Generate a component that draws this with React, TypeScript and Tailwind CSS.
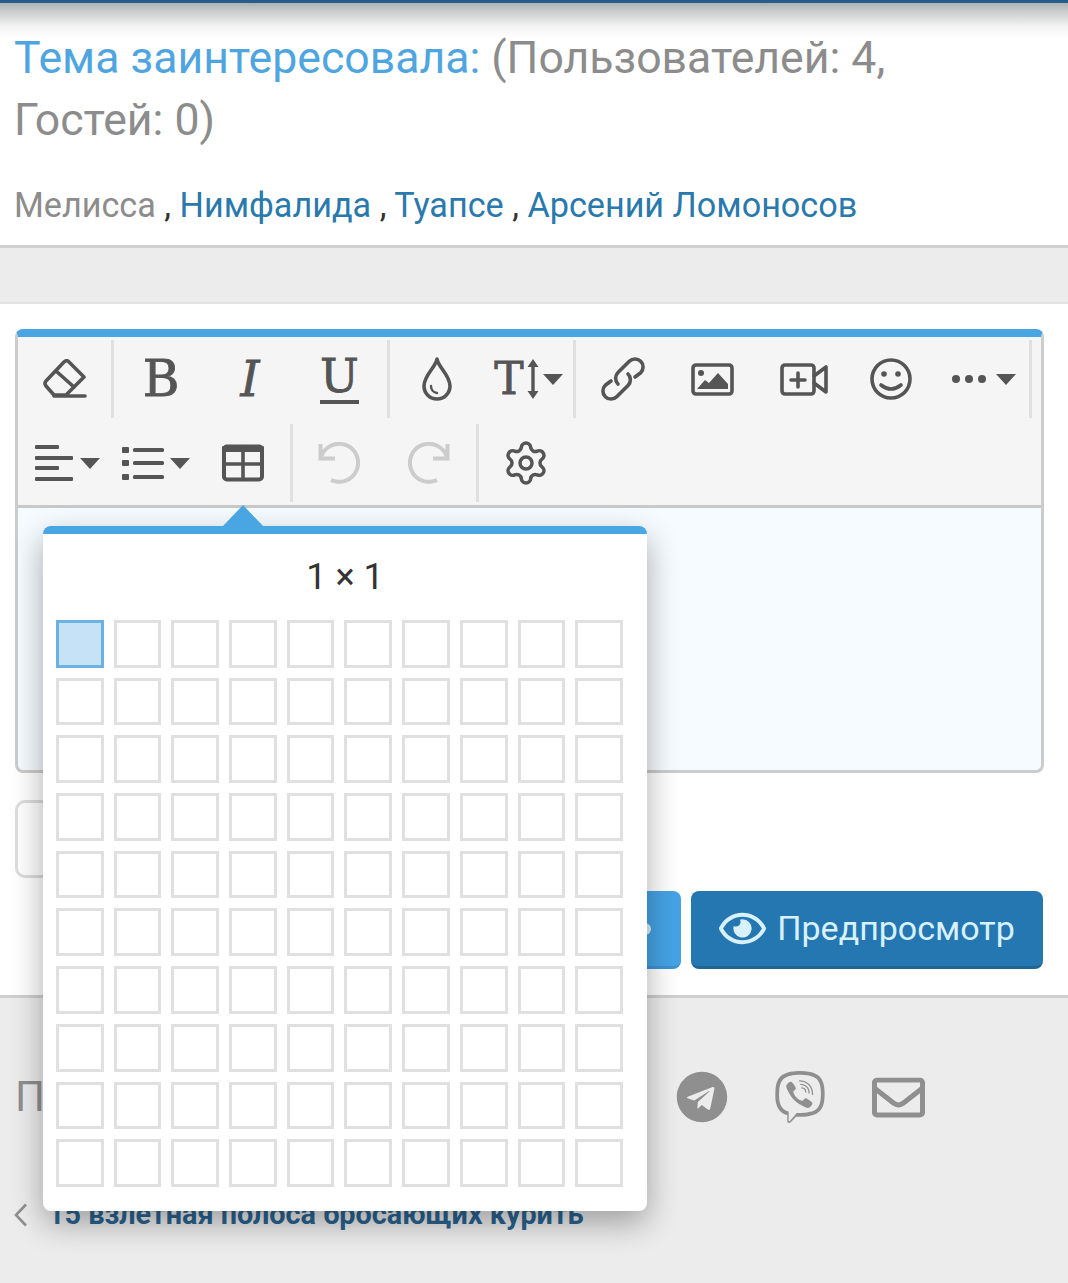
import React from "react";
import { FaTelegram, FaViber, FaRegEnvelope, FaRegEye } from "react-icons/fa";

const roboto = "[font-family:Roboto,sans-serif]";

const Caret = ({ className = "" }: { className?: string }) => (
  <span className={`inline-block w-0 h-0 border-x-[10px] border-x-transparent border-t-[11px] border-t-[#555] ${className}`} />
);

const Sep = () => <div className="w-[3px] bg-[#e0e0e0] my-[3px]" />;

const Btn = ({ w, children }: { w: string; children: React.ReactNode }) => (
  <div className={`${w} h-full flex items-center justify-center shrink-0`}>{children}</div>
);

const Ic = ({ w, h, children }: { w: number; h: number; children: React.ReactNode }) => (
  <svg width={w} height={h} viewBox={`0 0 ${w} ${h}`} fill="none" stroke="#555" strokeWidth={3.6} strokeLinecap="round" strokeLinejoin="round">
    {children}
  </svg>
);

const serif = "[font-family:'DejaVu_Serif',serif] text-[#555] leading-none [-webkit-text-stroke:0.8px_#555]";

function Row1() {
  return (
    <div className="flex h-[84px]">
      <Btn w="w-[93px]">
        <Ic w={44} h={40}>
          <path d="M25 2 L41 18 L23 36 H11 L3 27 Q1 24 3 22 L21 3 Q23 1 25 2Z" />
          <path d="M13 12 L31 28" />
          <path d="M11 37 H42" />
        </Ic>
      </Btn>
      <Sep />
      <Btn w="w-[94px]"><span className={`${serif} text-[50px] font-normal`}>B</span></Btn>
      <Btn w="w-[84px]"><span className={`${serif} text-[48px] italic`}>I</span></Btn>
      <Btn w="w-[95px]">
        <span className={`${serif} text-[46px] border-b-[4px] border-[#555] pb-[1px] mt-[-2px]`}>U</span>
      </Btn>
      <Sep />
      <Btn w="w-[94px]">
        <Ic w={32} h={44}>
          <path d="M16 2 C15 10 3 18 3 29 A13 13 0 0 0 29 29 C29 18 17 10 16 2Z" />
          <path d="M10 29 A7 7 0 0 0 16 36" strokeWidth={2.4} />
        </Ic>
      </Btn>
      <Btn w="w-[89px]">
        <div className="flex items-center">
          <span className={`${serif} text-[44px] font-normal`}>T</span>
          <svg width={12} height={42} viewBox="0 0 12 42" fill="#555" className="ml-[3px]">
            <path d="M6 1 L11.5 9 H7.7 V33 H11.5 L6 41 L.5 33 H4.3 V9 H.5Z" />
          </svg>
          <Caret className="ml-[4px]" />
        </div>
      </Btn>
      <Sep />
      <Btn w="w-[94px]">
        <Ic w={44} h={44}>
          <path d="M34 20 L39.7 15.7 A8 8 0 0 0 28.3 4.3 L17 15.6 A8 8 0 0 0 17 27" />
          <path d="M10 24 L4.3 28.3 A8 8 0 0 0 15.7 39.7 L27 28.4 A8 8 0 0 0 27 17" />
        </Ic>
      </Btn>
      <Btn w="w-[84px]">
        <Ic w={43} h={33}>
          <rect x={2} y={2} width={39} height={29} rx={3} />
          <circle cx={10} cy={10} r={3} fill="#555" stroke="none" />
          <path d="M6 26 L14 17 L18 20 L27 10 L37 21 V26Z" fill="#555" stroke="none" />
        </Ic>
      </Btn>
      <Btn w="w-[100px]">
        <Ic w={48} h={33}>
          <rect x={2} y={2} width={32} height={29} rx={3} />
          <path d="M18 10 V24 M11 17 H25" />
          <path d="M34 13 L46 4 V29 L34 20" />
        </Ic>
      </Btn>
      <Btn w="w-[74px]">
        <Ic w={42} h={42}>
          <circle cx={21} cy={21} r={19} />
          <circle cx={14} cy={16} r={2.8} fill="#555" stroke="none" />
          <circle cx={28} cy={16} r={2.8} fill="#555" stroke="none" />
          <path d="M11 27 Q21 35 31 27" />
        </Ic>
      </Btn>
      <Btn w="w-[101px]">
        <div className="flex items-center ml-[11px]">
          <span className="w-[8px] h-[8px] rounded-full bg-[#555]" />
          <span className="w-[8px] h-[8px] rounded-full bg-[#555] ml-[5px]" />
          <span className="w-[8px] h-[8px] rounded-full bg-[#555] ml-[5px]" />
          <Caret className="ml-[10px]" />
        </div>
      </Btn>
      <Sep />
    </div>
  );
}

function Row2() {
  return (
    <div className="flex h-[84px]">
      <Btn w="w-[92px]">
        <div className="flex items-center ml-[6px]">
          <svg width={38} height={37} viewBox="0 0 38 37" fill="#555">
            <rect x={0} y={0} width={24} height={4} rx={1} />
            <rect x={0} y={11} width={38} height={4} rx={1} />
            <rect x={0} y={21} width={24} height={4} rx={1} />
            <rect x={0} y={32} width={38} height={4} rx={1} />
          </svg>
          <Caret className="ml-[7px]" />
        </div>
      </Btn>
      <Btn w="w-[92px]">
        <div className="flex items-center">
          <svg width={43} height={33} viewBox="0 0 43 33" fill="#555">
            <rect x={0} y={0} width={7} height={6} rx={1} />
            <rect x={0} y={13} width={7} height={6} rx={1} />
            <rect x={0} y={27} width={7} height={6} rx={1} />
            <rect x={11} y={1} width={31} height={4} rx={1.5} />
            <rect x={11} y={14} width={31} height={4} rx={1.5} />
            <rect x={11} y={28} width={31} height={4} rx={1.5} />
          </svg>
          <Caret className="ml-[5px]" />
        </div>
      </Btn>
      <Btn w="w-[88px] pr-[6px]">
        <Ic w={42} h={38}>
          <rect x={2} y={2.5} width={38} height={33} rx={3} strokeWidth={4} />
          <path d="M2 5 H40" strokeWidth={6} />
          <path d="M2 20 H40 M21 5 V35" strokeWidth={3.6} />
        </Ic>
      </Btn>
      <Sep />
      <Btn w="w-[92px]">
        <svg width={42} height={42} viewBox="0 0 42 42" fill="none" stroke="#ccc" strokeWidth={4}>
          <path d="M2.5 2 V16.5 H17" />
          <path d="M3 15 A19 19 0 1 1 13 38" />
        </svg>
      </Btn>
      <Btn w="w-[91px] pr-[3px]">
        <svg width={42} height={42} viewBox="0 0 42 42" fill="none" stroke="#ccc" strokeWidth={4}>
          <path d="M39.5 2 V16.5 H25" />
          <path d="M39 15 A19 19 0 1 0 29 38" />
        </svg>
      </Btn>
      <Sep />
      <Btn w="w-[94px]">
        <svg width={48} height={48} viewBox="0 0 24 24" fill="none" stroke="#555" strokeWidth={1.75} strokeLinecap="round" strokeLinejoin="round">
          <path d="M9.671 4.136a2.34 2.34 0 0 1 4.659 0 2.34 2.34 0 0 0 3.319 1.915 2.34 2.34 0 0 1 2.33 4.033 2.34 2.34 0 0 0 0 3.831 2.34 2.34 0 0 1-2.33 4.033 2.34 2.34 0 0 0-3.319 1.915 2.34 2.34 0 0 1-4.659 0 2.34 2.34 0 0 0-3.32-1.915 2.34 2.34 0 0 1-2.33-4.033 2.34 2.34 0 0 0 0-3.831A2.34 2.34 0 0 1 6.35 6.051a2.34 2.34 0 0 0 3.319-1.915" />
          <circle cx={12} cy={12} r={3} />
        </svg>
      </Btn>
    </div>
  );
}

function Popup() {
  const cells = Array.from({ length: 100 }, (_, i) => i);
  return (
    <div className="absolute left-[28px] top-[197px] w-[604px] h-[685px] bg-white border-t-[8px] border-[#4aa5e3] rounded-[8px] shadow-[0_12px_32px_rgba(0,0,0,0.33)]">
      <div className="absolute left-[180px] top-[-29px] w-0 h-0 border-x-[20px] border-x-transparent border-b-[21px] border-b-[#4aa5e3]" />
      <div className="text-center text-[36px] leading-[50px] text-[#333] pt-[18px] mb-[18px]">1 × 1</div>
      <div className="grid grid-cols-[repeat(10,47.7px)] auto-rows-[47.7px] gap-x-[10px] gap-y-[10px] pl-[13px]">
        {cells.map((i) => (
          <div key={i} className={i === 0 ? "border-[3px] border-[#6cb2e4] bg-[#c5e2f7]" : "border-[3px] border-[#e0e0e0] bg-white"} />
        ))}
      </div>
    </div>
  );
}

export default function App() {
  return (
    <div className={`relative w-[1068px] h-[1283px] overflow-hidden bg-white flex flex-col ${roboto}`}>
      <div className="h-[3px] bg-[#245d8c]" />
      <section className="h-[242px] pt-[25px] pl-[14px] pr-[15px] bg-[linear-gradient(to_bottom,#aeb1b3_0,#c9cbcc_8px,#f4f4f4_24px,#ffffff_36px)]">
        <div className="text-[44.6px] leading-[61.5px] text-[#8c8c8c] pr-[100px]">
          <span className="text-[#4ea5df]">Тема заинтересовала:</span> (Пользователей: 4, Гостей: 0)
        </div>
        <div className="text-[34.2px] leading-[40px] mt-[34px] text-[#333]">
          <span className="text-[#8c8c8c]">Мелисса</span> , <span className="text-[#2a79ad]">Нимфалида</span> ,{" "}
          <span className="text-[#2a79ad]">Туапсе</span> , <span className="text-[#2a79ad]">Арсений Ломоносов</span>
        </div>
      </section>
      <div className="h-[59px] bg-[#ececec] border-t-[3px] border-b-[2px] border-t-[#d0d0d0] border-b-[#e2e2e2] shrink-0" />
      <main className="h-[691px] shrink-0 pl-[15px] pr-[25px] pt-[25px] bg-white">
        <div className="relative w-[1029px]">
          <div className="h-[444px] rounded-[8px] border-t-[8px] border-x-[3px] border-b-[3px] border-t-[#4aa5e3] border-x-[#cccccc] border-b-[#cccccc] bg-[#f6fbff] overflow-hidden">
            <div className="bg-[#f5f5f5] border-b-[3px] border-[#c8c8c8]">
              <Row1 />
              <Row2 />
            </div>
          </div>
          <Popup />
        </div>
        <div className="mt-[27px] w-[600px] h-[78px] rounded-[10px] border-[3px] border-[#dddddd] bg-white" />
        <div className="mt-[13px] flex justify-end gap-[10px] h-[78px]">
          <div className="w-[300px] rounded-[8px] bg-[#45a3e5] border-b-[3px] border-[#3d93d0] flex items-center justify-end pr-[30px]">
            <span className="w-[12px] h-[12px] rounded-full bg-[#dff3ff]" />
          </div>
          <div className="w-[352px] rounded-[8px] bg-[#2577b1] border-b-[3px] border-[#1f6697] flex items-center justify-center gap-[11px] text-[34px] text-[#d8f1ff]">
            <FaRegEye size={47} />
            <span>Предпросмотр</span>
          </div>
        </div>
      </main>
      <footer className="flex-1 bg-[#ececec] border-t-[3px] border-[#cfcfcf] pt-[73px] px-[15px]">
        <div className="flex items-center h-[52px] text-[#8f8f8f]">
          <span className="text-[42px] leading-none">Поделиться</span>
          <div className="ml-auto flex items-center gap-[46px] mr-[128px]">
            <FaTelegram size={52} />
            <FaViber size={52} />
            <FaRegEnvelope size={53} />
          </div>
        </div>
        <div className="flex items-center h-[40px] mt-[72px]">
          <svg width={14} height={24} viewBox="0 0 14 24" fill="none" stroke="#8f8f8f" strokeWidth={2.6} className="-mt-[1px] -ml-[1px]">
            <path d="M12 1.5 L2 12 L12 22.5" />
          </svg>
          <span className="ml-[20px] text-[28.8px] font-bold text-[#2a6492] whitespace-nowrap">15 взлетная полоса бросающих курить</span>
        </div>
      </footer>
    </div>
  );
}
